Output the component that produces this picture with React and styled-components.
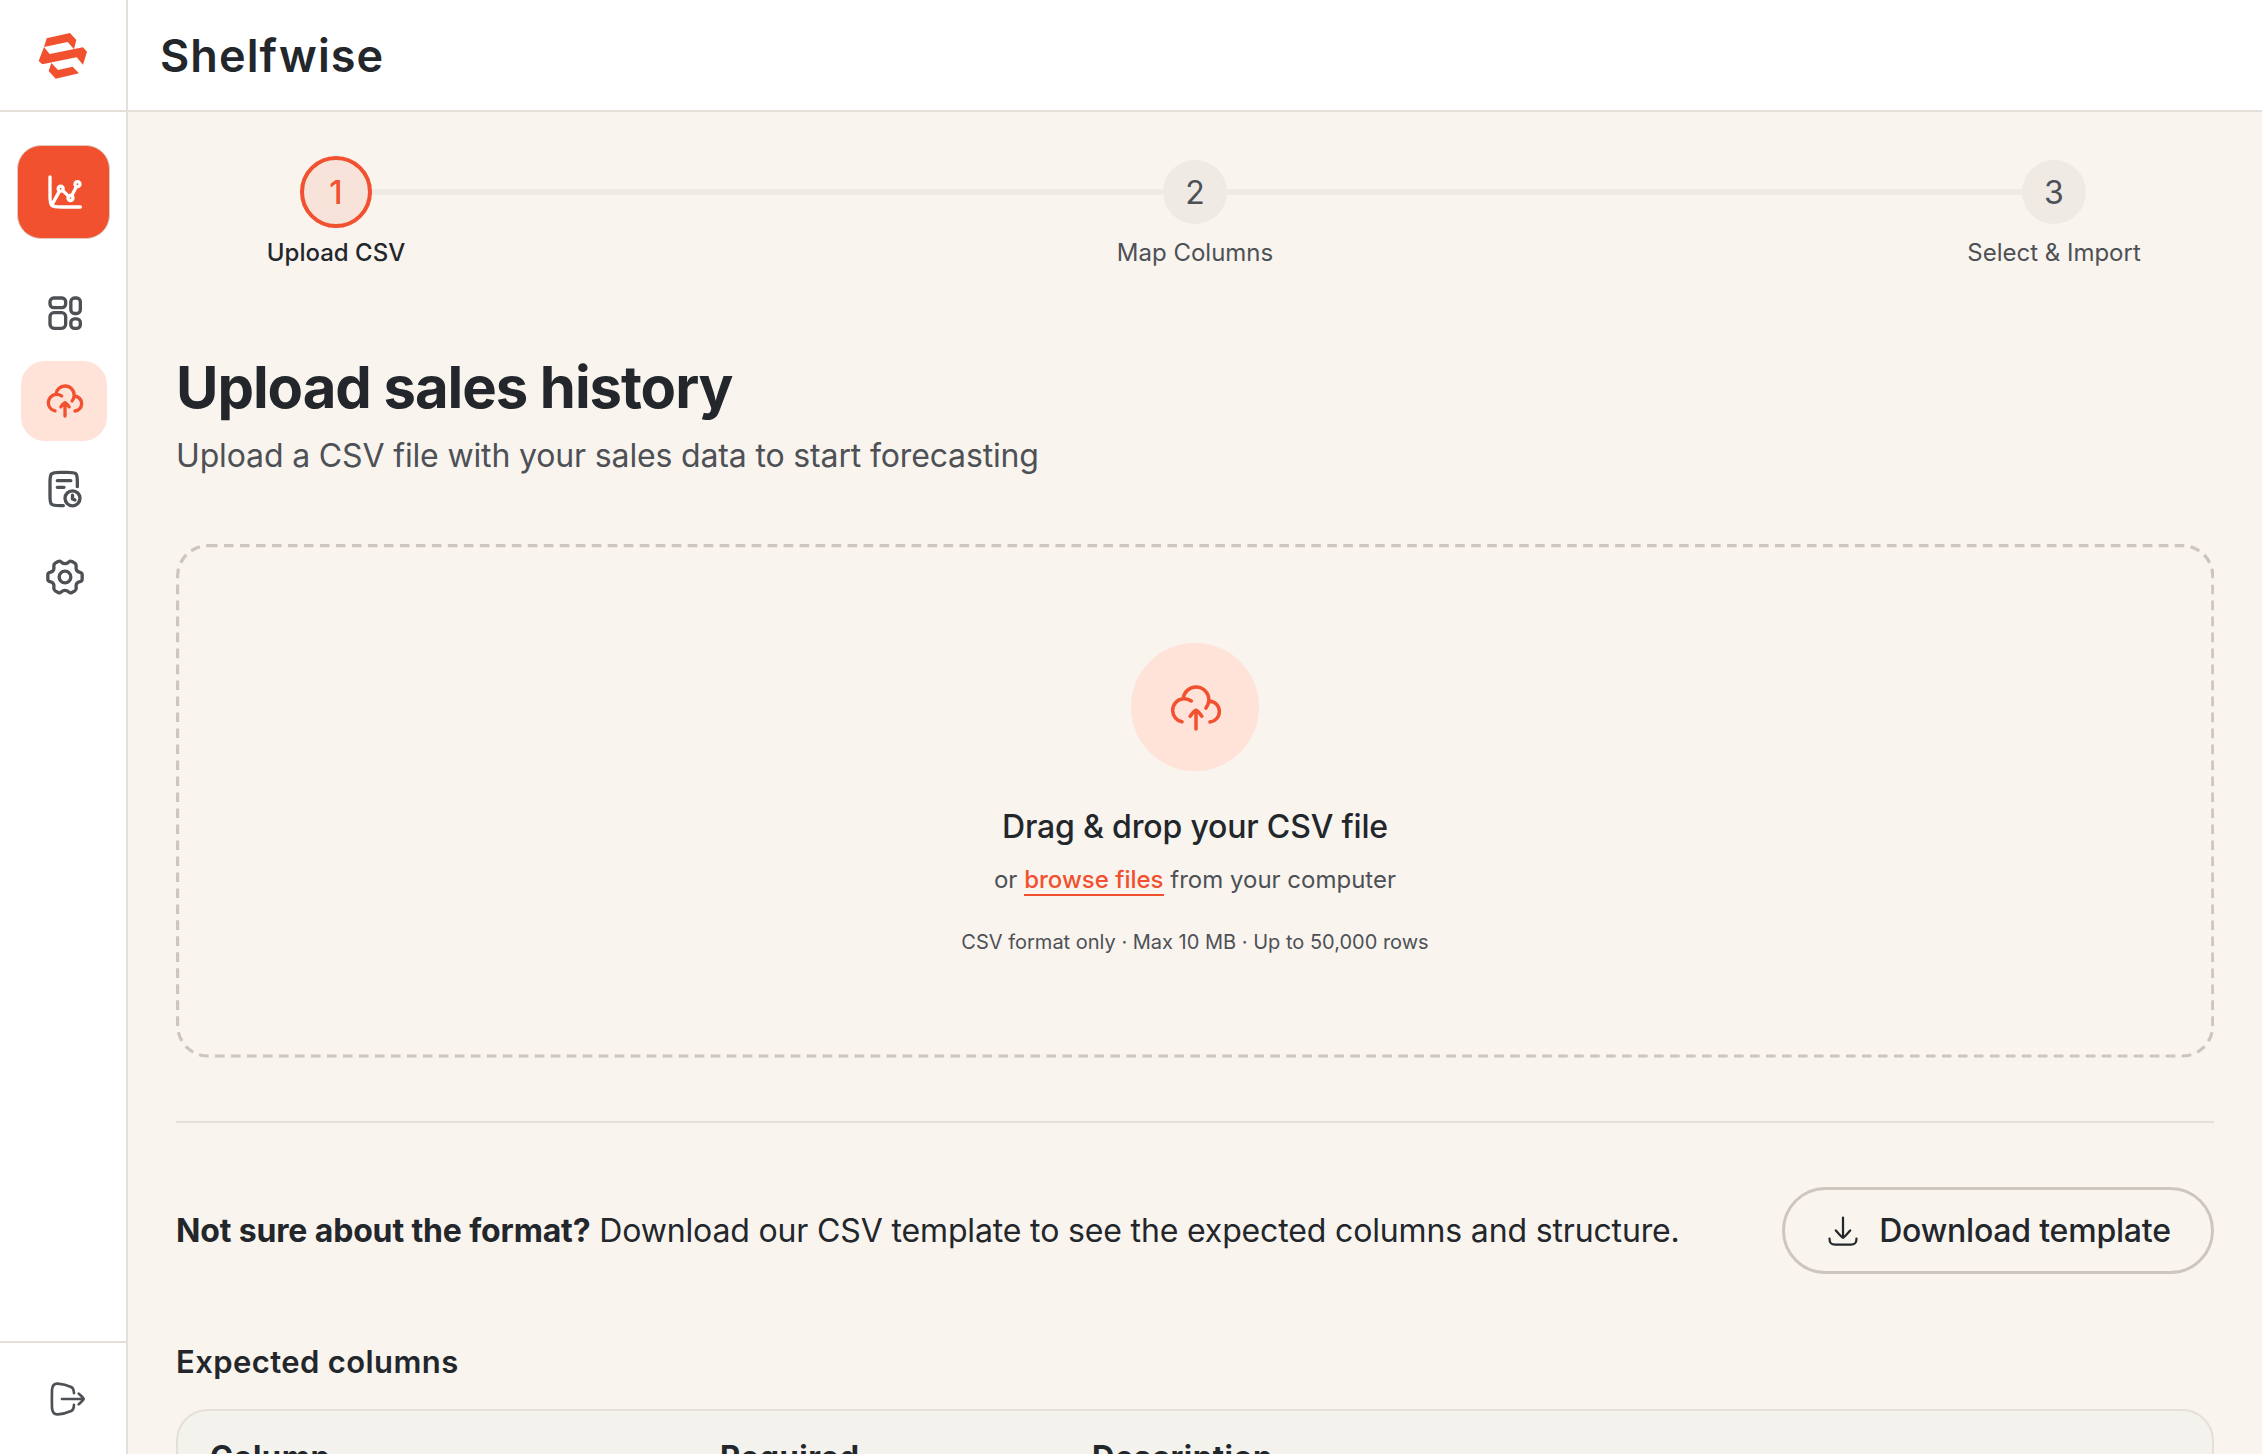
import React from 'react';
import styled, { createGlobalStyle } from 'styled-components';

const colors = {
    accent: '#f1512f',
    accentSoft: '#ffe2d8',
    ink: '#23272c',
    muted: '#4d5156',
    line: '#e5dfd9',
    border: '#ccc6bf',
    page: '#f9f4ee',
};

const GlobalStyle = createGlobalStyle`
    *, *::before {
        box-sizing: border-box;
    }
    body {
        margin: 0;
        background: ${colors.page};
        color: ${colors.ink};
        font-family: Inter, "Liberation Sans", sans-serif;
    }
`;

const Shell = styled.div`
    display: flex;
    height: 1454px;
    overflow: hidden;
`;

const Sidebar = styled.aside`
    display: flex;
    flex-direction: column;
    flex: none;
    width: 128px;
    background: #fff;
    border-right: 2px solid ${colors.line};
`;

const LogoBox = styled.div`
    display: flex;
    align-items: center;
    justify-content: center;
    height: 112px;
    padding-top: 2px;
    border-bottom: 2px solid ${colors.line};
`;

const Nav = styled.nav`
    display: flex;
    flex-direction: column;
    flex: 1;
    align-items: center;
    gap: 8px;
    padding: 33px 0 0 2px;
`;

const PrimaryButton = styled.button`
    display: flex;
    align-items: center;
    justify-content: center;
    width: 93px;
    height: 94px;
    margin: 0 2px 26px 0;
    padding: 0 0 0 3px;
    border: 1px solid #dccbc2;
    border-radius: 24px;
    background: ${colors.accent};
    color: #fff;
`;

const NavItem = styled.a`
    display: flex;
    align-items: center;
    justify-content: center;
    width: 86px;
    height: 80px;
    padding-left: 2px;
    border-radius: 24px;
    color: ${props => props.$active ? colors.accent : colors.muted};
    background: ${props => props.$active ? colors.accentSoft : 'none'};
`;

const SidebarFooter = styled.div`
    display: flex;
    align-items: center;
    justify-content: center;
    height: 113px;
    padding-left: 8px;
    border-top: 2px solid ${colors.line};
    color: ${colors.muted};
`;

const Main = styled.div`
    flex: 1;
    min-width: 0;
`;

const Header = styled.header`
    display: flex;
    align-items: center;
    height: 112px;
    padding: 2px 0 0 32px;
    background: #fff;
    border-bottom: 2px solid ${colors.line};
`;

const Brand = styled.div`
    font-size: 45px;
    font-weight: 600;
    line-height: 56px;
    letter-spacing: 1.1px;
`;

const Content = styled.main`
    padding: 48px 48px 0;
`;

const Track = styled.div`
    display: flex;
    align-items: center;
    height: 64px;
    padding: 0 128px;
`;

const StepCircle = styled.div`
    position: relative;
    z-index: 1;
    display: flex;
    align-items: center;
    justify-content: center;
    flex: none;
    width: ${props => props.$active ? 72 : 64}px;
    height: ${props => props.$active ? 72 : 64}px;
    margin: ${props => props.$active ? '-4px' : 0};
    border: ${props => props.$active ? `4px solid ${colors.accent}` : 'none'};
    border-radius: 50%;
    background: ${props => props.$active ? '#f8e3da' : '#efeae4'};
    color: ${props => props.$active ? colors.accent : colors.muted};
    font-size: 32px;
    font-weight: ${props => props.$active ? 500 : 400};
`;

const StepLine = styled.div`
    flex: 1;
    height: 6px;
    background: #efeae4;
`;

const StepLabels = styled.div`
    display: flex;
    justify-content: space-between;
    margin-top: 11px;
`;

const StepLabel = styled.div`
    width: 320px;
    text-align: center;
    font-size: 24px;
    line-height: 36px;
    color: ${props => props.$active ? colors.ink : colors.muted};
    font-weight: ${props => props.$active ? 500 : 400};
`;

const PageTitle = styled.h1`
    margin: 80px 0 0;
    font-size: 58px;
    font-weight: 700;
    line-height: 72px;
    letter-spacing: -1.05px;
`;

const PageSubtitle = styled.p`
    margin: 9px 0 0;
    font-size: 32px;
    line-height: 48px;
    letter-spacing: -0.15px;
    color: ${colors.muted};
`;

const DropZone = styled.section`
    position: relative;
    display: flex;
    flex-direction: column;
    align-items: center;
    height: 514px;
    margin-top: 64px;
    padding-top: 99px;

    &::before {
        content: "";
        position: absolute;
        top: 0;
        left: 0;
        width: 62.5%;
        height: 62.5%;
        border: 2px dashed ${colors.border};
        border-radius: 20px;
        transform: scale(1.6);
        transform-origin: 0 0;
        pointer-events: none;
    }
`;

const DropIcon = styled.div`
    display: flex;
    align-items: center;
    justify-content: center;
    width: 128px;
    height: 128px;
    padding: 2px 0 0 2px;
    border-radius: 50%;
    background: ${colors.accentSoft};
    color: ${colors.accent};
`;

const DropTitle = styled.div`
    margin-top: 32px;
    font-size: 32px;
    font-weight: 500;
    line-height: 48px;
    letter-spacing: -0.17px;
`;

const DropText = styled.div`
    margin-top: 11px;
    font-size: 24px;
    line-height: 36px;
    color: ${colors.muted};
`;

const BrowseLink = styled.span`
    display: inline-block;
    line-height: 29px;
    border-bottom: 2px solid ${colors.accent};
    color: ${colors.accent};
    font-weight: 500;
`;

const DropHint = styled.div`
    margin-top: 29px;
    font-size: 20px;
    line-height: 30px;
    color: ${colors.muted};
`;

const Divider = styled.hr`
    height: 2px;
    margin: 63px 0 64px;
    border: none;
    background: ${colors.line};
`;

const TemplateRow = styled.div`
    display: flex;
    align-items: center;
    justify-content: space-between;
`;

const TemplateText = styled.p`
    margin: 0;
    font-size: 32px;
    line-height: 48px;
    letter-spacing: -0.15px;

    strong {
        font-weight: 700;
    }
`;

const OutlineButton = styled.button`
    display: flex;
    align-items: center;
    justify-content: center;
    gap: 18px;
    width: 432px;
    height: 87px;
    padding: 0;
    border: 3px solid ${colors.border};
    border-radius: 44px;
    background: none;
    color: ${colors.ink};
    font-family: inherit;
    font-size: 32px;
    font-weight: 500;
    letter-spacing: -0.2px;
`;

const SectionTitle = styled.h2`
    margin: 68px 0 27px;
    font-size: 31px;
    font-weight: 600;
    line-height: 40px;
    letter-spacing: 0.4px;
`;

const TableHead = styled.div`
    display: grid;
    grid-template-columns: 510px 372px 1fr;
    height: 200px;
    padding: 26px 32px;
    border: 2px solid ${colors.line};
    border-radius: 32px;
    background: #f4f2ed;
    font-size: 31px;
    font-weight: 700;
    line-height: 40px;
    letter-spacing: 0.5px;
`;

const Icon = ({size = 40, stroke = 2, children}) => (
    <svg
        width={size}
        height={size}
        viewBox="0 0 24 24"
        fill="none"
        stroke="currentColor"
        strokeWidth={stroke}
        strokeLinecap="round"
        strokeLinejoin="round"
    >
        {children}
    </svg>
);

const Logo = () => (
    <svg width="50" height="48" viewBox="0 0 150 144" fill={colors.accent}>
        <path d="M26 19 96 3 115 24 108 52 89 30 18 45Z" />
        <path d="M2 87 18 45 35 66 135 46 147 59 135 98 116 76 13 97Z" />
        <path d="M40 93 60 114 104 104 123 124 53 140 32 117Z" />
    </svg>
);

const ChartIcon = () => (
    <Icon>
        <path d="M21.2 21H10C6.7 21 5.05 21 4.03 19.97 3 18.95 3 17.3 3 14V3" />
        <path d="M4.3 19.4 8.6 11.6M10.7 11.2 14.1 14.5M16.1 14.1 18.8 8.8" />
        <circle cx="9.4" cy="10" r="1.5" />
        <circle cx="15.3" cy="15.6" r="1.5" />
        <circle cx="19.5" cy="7.3" r="1.5" />
    </Icon>
);

const DashboardIcon = () => (
    <Icon>
        <rect x="3" y="3" width="9.4" height="5.8" rx="2.2" />
        <rect x="3" y="11.8" width="9.4" height="9.4" rx="2.4" />
        <rect x="15.5" y="3" width="5.7" height="9.3" rx="2.2" />
        <rect x="15.5" y="15.5" width="5.7" height="5.7" rx="2.2" />
    </Icon>
);

const CloudUploadIcon = ({size, stroke}) => (
    <Icon size={size} stroke={stroke}>
        <path d="M17.48 9.01h.02c2.49 0 4.5 2.02 4.5 4.51 0 2.32-1.75 4.23-4 4.48M17.48 9.01c.01-.16.02-.33.02-.5C17.5 5.47 15.04 3 12 3 9.12 3 6.76 5.21 6.52 8.03M17.48 9.01c-.1 1.14-.55 2.18-1.24 3.01M6.52 8.03C3.98 8.27 2 10.41 2 13.02c0 2.42 1.72 4.44 4 4.91M6.52 8.03c.16-.01.32-.02.48-.02 1.13 0 2.16.37 3 1" />
        <path d="M12 13v8M12 13c-.7 0-2.01 1.99-2.5 2.5M12 13c.7 0 2.01 1.99 2.5 2.5" />
    </Icon>
);

const HistoryIcon = () => (
    <Icon>
        <path d="M19.4 10.6V8c0-3 0-4.3-.9-5.1S16.1 2 13.2 2H9C6 2 4.8 2.1 3.9 3S3 5.2 3 8v8c0 2.9 0 4.2.9 5.1s2.1.9 5.1.9h2" />
        <path d="M7.4 7h8.1M7.4 11h4" />
        <circle cx="16.5" cy="17.6" r="4.5" />
        <path d="M16.5 15.7v2.300l1.500.6" />
    </Icon>
);

const SettingsIcon = () => (
    <Icon>
        <path d="M12 4C13.400 4 13.700 3.500 14.400 2.900 14.900 2.400 15.500 2.400 16.100 2.700L17.900 3.700C18.500 4.100 18.700 4.500 18.700 5.200 18.600 6.600 18.500 7.200 18.900 7.900 19.300 8.600 20 9 21 9.200 21.900 9.400 22.300 9.800 22.300 10.600V13.400C22.300 14.200 21.900 14.600 21 14.800 20 15 19.300 15.400 18.900 16.100 18.500 16.800 18.600 17.400 18.700 18.800 18.700 19.500 18.500 19.900 17.900 20.300L16.100 21.300C15.500 21.600 14.900 21.600 14.400 21.100 13.700 20.500 13.400 20 12 20 10.600 20 10.300 20.500 9.600 21.100 9.100 21.600 8.500 21.600 7.900 21.300L6.100 20.300C5.500 19.900 5.300 19.500 5.300 18.800 5.400 17.400 5.500 16.800 5.100 16.100 4.700 15.400 4 15 3 14.800 2.100 14.600 1.700 14.200 1.700 13.400V10.600C1.700 9.800 2.100 9.400 3 9.200 4 9 4.700 8.600 5.100 7.900 5.500 7.200 5.400 6.600 5.300 5.200 5.300 4.500 5.500 4.100 6.100 3.700L7.900 2.700C8.500 2.400 9.100 2.400 9.600 2.900 10.300 3.500 10.600 4 12 4Z" />
        <circle cx="12" cy="12" r="3.5" />
    </Icon>
);

const LogoutIcon = () => (
    <Icon stroke={1.6}>
        <path d="M16.2 8.5C16.1 6.3 15.9 5.5 14.5 4.8 12.5 3.9 9 3 6.5 2.8 4.500 2.700 3.200 3.500 3 6.500 2.900 10 2.900 14 3 17.500 3.200 20.500 4.500 21.300 6.500 21.200 9 21 12.500 20.100 14.500 19.200 15.900 18.500 16.100 17.700 16.200 15.500" />
        <path d="M9 12h13M19 8.8C19.5 9.3 22 11.3 22 12S19.500 14.700 19 15.200" />
    </Icon>
);

const DownloadIcon = () => (
    <Icon size={36} stroke={1.5}>
        <path d="M12 3v13.500M12 16.500C11.300 16.500 7.800 12.300 7.200 11.600M12 16.500C12.700 16.500 16.200 12.300 16.800 11.600" />
        <path d="M3 17c0 3 .9 4 3.900 4h10.200c3 0 3.900-1 3.900-4" />
    </Icon>
);

const navItems = [
    {key: 'dashboard', icon: <DashboardIcon />},
    {key: 'upload', icon: <CloudUploadIcon />, active: true},
    {key: 'history', icon: <HistoryIcon />},
    {key: 'settings', icon: <SettingsIcon />},
];

const steps = ['Upload CSV', 'Map Columns', 'Select & Import'];

const Stepper = ({current}) => (
    <div>
        <Track>
            {steps.map((step, index) => (
                <React.Fragment key={step}>
                    {index > 0 && <StepLine />}
                    <StepCircle $active={index === current}>{index + 1}</StepCircle>
                </React.Fragment>
            ))}
        </Track>
        <StepLabels>
            {steps.map((step, index) => (
                <StepLabel key={step} $active={index === current}>{step}</StepLabel>
            ))}
        </StepLabels>
    </div>
);

const App = () => {
    return(
        <Shell>
            <GlobalStyle />
            <Sidebar>
                <LogoBox><Logo /></LogoBox>
                <Nav>
                    <PrimaryButton><ChartIcon /></PrimaryButton>
                    {navItems.map(item => (
                        <NavItem key={item.key} $active={item.active}>{item.icon}</NavItem>
                    ))}
                </Nav>
                <SidebarFooter><LogoutIcon /></SidebarFooter>
            </Sidebar>
            <Main>
                <Header><Brand>Shelfwise</Brand></Header>
                <Content>
                    <Stepper current={0} />
                    <PageTitle>Upload sales history</PageTitle>
                    <PageSubtitle>Upload a CSV file with your sales data to start forecasting</PageSubtitle>
                    <DropZone>
                        <DropIcon><CloudUploadIcon size={56} stroke={1.5} /></DropIcon>
                        <DropTitle>Drag &amp; drop your CSV file</DropTitle>
                        <DropText>or <BrowseLink>browse files</BrowseLink> from your computer</DropText>
                        <DropHint>CSV format only · Max 10 MB · Up to 50,000 rows</DropHint>
                    </DropZone>
                    <Divider />
                    <TemplateRow>
                        <TemplateText>
                            <strong>Not sure about the format?</strong> Download our CSV template to see the expected columns and structure.
                        </TemplateText>
                        <OutlineButton><DownloadIcon />Download template</OutlineButton>
                    </TemplateRow>
                    <SectionTitle>Expected columns</SectionTitle>
                    <TableHead>
                        <span>Column</span>
                        <span>Required</span>
                        <span>Description</span>
                    </TableHead>
                </Content>
            </Main>
        </Shell>
    );
};

export default App;
